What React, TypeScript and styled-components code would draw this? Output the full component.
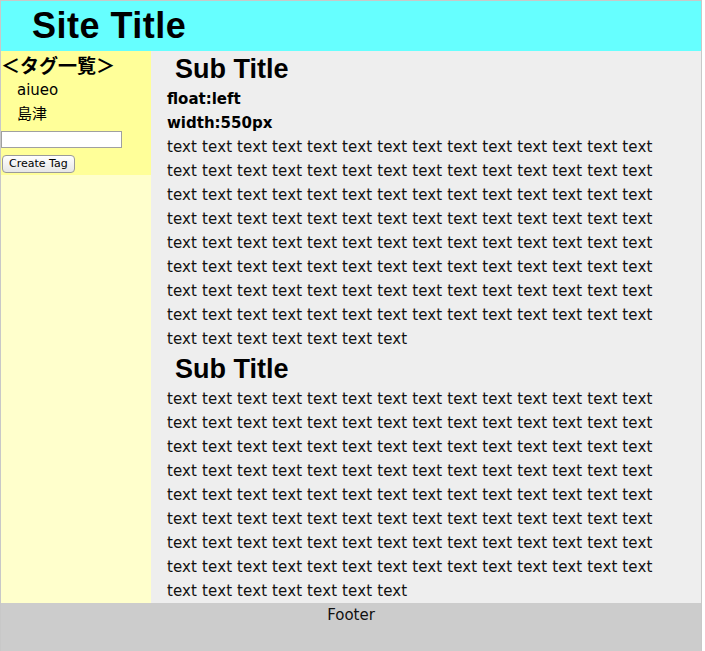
import React from "react";
import styled, { createGlobalStyle } from "styled-components";

const GlobalStyle = createGlobalStyle`
  html, body { margin: 0; padding: 0; background: #fff; }
  body { font-family: "DejaVu Sans", "Noto Sans CJK JP", sans-serif; font-size: 15px; color: #000; }
`;

const Page = styled.div`
  width: 700px;
  border: 1px solid #c8c8c8;
  border-bottom: none;
`;

const Header = styled.header`
  height: 50px;
  background: #66ffff;
`;

const SiteTitle = styled.h1`
  margin: 0;
  padding-left: 31px;
  font-family: "Liberation Sans", Arial, sans-serif;
  font-weight: bold;
  font-size: 36px;
  letter-spacing: 0.5px;
  line-height: 50px;
`;

const Body = styled.div`
  display: flex;
  align-items: stretch;
`;

const Sidebar = styled.aside`
  width: 150px;
  flex: none;
  background: #ffffcc;
`;

const TagBox = styled.div`
  background: #ffff99;
  padding-bottom: 2px;
`;

const TagHeading = styled.h3`
  margin: 0;
  font-family: "Noto Sans CJK JP", sans-serif;
  font-weight: bold;
  font-size: 19px;
  line-height: 24px;
  height: 27px;
  padding-top: 2px;
  box-sizing: border-box;
`;

const TagList = styled.ul`
  list-style: none;
  margin: 0;
  padding: 0 0 0 16px;
`;

const TagItem = styled.li`
  line-height: 24px;
  font-size: 15px;
  font-family: "DejaVu Sans", "Noto Sans CJK JP", sans-serif;
`;

const TagForm = styled.form`
  display: flex;
  flex-direction: column;
  align-items: flex-start;
  padding-top: 5px;
  gap: 7px;
`;

const TagInput = styled.input`
  box-sizing: border-box;
  width: 121px;
  height: 17px;
  margin: 0;
  border: 1px solid #a0a0a0;
  background: #fff;
  padding: 0 2px;
`;

const Button = styled.button`
  box-sizing: border-box;
  height: 18px;
  margin: 0 0 0 1px;
  padding: 0 6px;
  border: 1px solid #9a9a9a;
  border-radius: 4px;
  background: linear-gradient(#ffffff, #e6e6e6);
  font-family: "DejaVu Sans", sans-serif;
  font-size: 11px;
  line-height: 16px;
  color: #000;
`;

const Main = styled.main`
  width: 550px;
  box-sizing: border-box;
  padding: 0 22px 0 16px;
  background: #eeeeee;
`;

const SubTitle = styled.h2`
  margin: 0;
  padding-left: 8px;
  font-family: "Liberation Sans", Arial, sans-serif;
  font-weight: bold;
  font-size: 27px;
  line-height: 36px;
`;

const Note = styled.p`
  margin: 0;
  font-weight: bold;
  line-height: 24px;
`;

const Text = styled.p`
  margin: 0;
  line-height: 24px;
  letter-spacing: 0.13px;
  color: #111;
`;

const Footer = styled.footer`
  background: #cccccc;
  text-align: center;
  line-height: 24px;
  height: 50px;
  color: #111;
`;

const words = Array(119).fill("text").join(" ");

export default function App() {
  return (
    <>
      <GlobalStyle />
      <Page>
        <Header>
          <SiteTitle>Site Title</SiteTitle>
        </Header>
        <Body>
          <Sidebar>
            <TagBox>
              <TagHeading>＜タグ一覧＞</TagHeading>
              <TagList>
                <TagItem>aiueo</TagItem>
                <TagItem>島津</TagItem>
              </TagList>
              <TagForm onSubmit={(e) => e.preventDefault()}>
                <TagInput type="text" />
                <Button type="submit">Create Tag</Button>
              </TagForm>
            </TagBox>
          </Sidebar>
          <Main>
            <SubTitle>Sub Title</SubTitle>
            <Note>float:left</Note>
            <Note>width:550px</Note>
            <Text>{words}</Text>
            <SubTitle>Sub Title</SubTitle>
            <Text>{words}</Text>
          </Main>
        </Body>
        <Footer>Footer</Footer>
      </Page>
    </>
  );
}
